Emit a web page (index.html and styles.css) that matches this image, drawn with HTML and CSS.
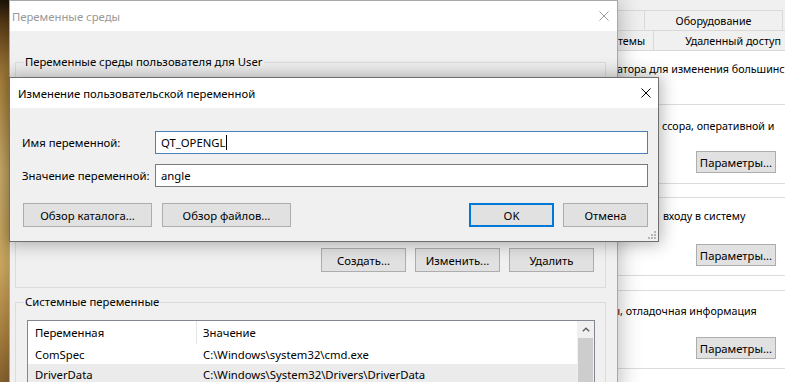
FILE: index.html
```html
<!DOCTYPE html>
<html lang="ru">
<head>
<meta charset="utf-8">
<title>Изменение пользовательской переменной</title>
<link rel="stylesheet" href="styles.css">
</head>
<body>
<div class="desktop">

  <div class="win sys">
    <div class="sys-tabs">
      <div class="tab-row">
        <div class="tab tab-a"></div>
        <div class="tab tab-b">Оборудование</div>
      </div>
      <div class="tab-row">
        <div class="tab tab-c"><span>Защита системы</span></div>
        <div class="tab tab-d">Удаленный доступ</div>
      </div>
    </div>
    <div class="sys-page">
      <div class="sys-intro">атора для изменения большинства параметров.</div>
      <div class="sys-group g1">
        <div class="sys-text">ссора, оперативной и</div>
        <button class="btn sys-btn">Параметры...</button>
      </div>
      <div class="sys-group g2">
        <div class="sys-text">входу в систему</div>
        <button class="btn sys-btn">Параметры...</button>
      </div>
      <div class="sys-group g3">
        <div class="sys-text">ы, отладочная информация</div>
        <button class="btn sys-btn">Параметры...</button>
      </div>
    </div>
  </div>

  <div class="win env">
    <div class="titlebar env-title">
      <span class="title-text">Переменные среды</span>
      <svg class="close" width="10" height="10" viewBox="0 0 10 10"><path d="M0.5 0.5L9.5 9.5M9.5 0.5L0.5 9.5" stroke="#9a9a9a" stroke-width="1" fill="none"/></svg>
    </div>
    <div class="env-body">
      <div class="group group-user">
        <div class="group-label">Переменные среды пользователя для User</div>
        <div class="listview lv-user">
          <div class="lv-head"><div class="c1">Переменная</div><div class="c2">Значение</div></div>
          <div class="lv-row"><div class="c1">Path</div><div class="c2">C:\Users\User\AppData\Local\Microsoft\WindowsApps;</div></div>
          <div class="lv-row"><div class="c1">TEMP</div><div class="c2">C:\Users\User\AppData\Local\Temp</div></div>
          <div class="lv-row"><div class="c1">TMP</div><div class="c2">C:\Users\User\AppData\Local\Temp</div></div>
        </div>
        <div class="btn-row">
          <button class="btn env-btn">Создать...</button>
          <button class="btn env-btn">Изменить...</button>
          <button class="btn env-btn">Удалить</button>
        </div>
      </div>
      <div class="group group-sys">
        <div class="group-label">Системные переменные</div>
        <div class="listview lv-sys">
          <div class="lv-main">
            <div class="lv-head"><div class="c1">Переменная</div><div class="c2">Значение</div></div>
            <div class="lv-row"><div class="c1">ComSpec</div><div class="c2">C:\Windows\system32\cmd.exe</div></div>
            <div class="lv-row sel"><div class="c1">DriverData</div><div class="c2">C:\Windows\System32\Drivers\DriverData</div></div>
          </div>
          <div class="scrollbar">
            <div class="sb-arrow"><svg width="8" height="5" viewBox="0 0 8 5"><path d="M0.8 4.3L4 1.2L7.2 4.3" stroke="#606060" stroke-width="1.4" fill="none"/></svg></div>
            <div class="sb-thumb"></div>
          </div>
        </div>
      </div>
    </div>
  </div>

  <div class="win dlg">
    <div class="titlebar dlg-title">
      <span class="title-text">Изменение пользовательской переменной</span>
      <svg class="close" width="10" height="10" viewBox="0 0 10 10"><path d="M0.5 0.5L9.5 9.5M9.5 0.5L0.5 9.5" stroke="#000" stroke-width="1" fill="none"/></svg>
    </div>
    <div class="dlg-body">
      <div class="form">
        <label class="form-label">Имя переменной:</label>
        <div class="input focused">QT_OPENGL<span class="caret"></span></div>
        <label class="form-label">Значение переменной:</label>
        <div class="input">angle</div>
      </div>
      <div class="dlg-buttons">
        <button class="btn dlg-btn">Обзор каталога...</button>
        <button class="btn dlg-btn">Обзор файлов...</button>
        <button class="btn dlg-btn small ok">OK</button>
        <button class="btn dlg-btn small">Отмена</button>
      </div>
    </div>
    <svg class="grip" width="8" height="8" viewBox="0 0 8 8">
      <rect x="6" y="0" width="2" height="2" fill="#b5b5b5"/>
      <rect x="3" y="3" width="2" height="2" fill="#b5b5b5"/>
      <rect x="6" y="3" width="2" height="2" fill="#b5b5b5"/>
      <rect x="0" y="6" width="2" height="2" fill="#b5b5b5"/>
      <rect x="3" y="6" width="2" height="2" fill="#b5b5b5"/>
      <rect x="6" y="6" width="2" height="2" fill="#b5b5b5"/>
    </svg>
  </div>

</div>
</body>
</html>
```

FILE: styles.css
```css
html, body {
  margin: 0;
  padding: 0;
}
body {
  width: 785px;
  height: 382px;
  overflow: hidden;
  font-family: "Segoe UI", "Noto Sans", "Liberation Sans", sans-serif;
  font-size: 11.3px;
  color: #000;
}
* { box-sizing: border-box; }

/* ---------- Common ---------- */
.btn {
  font: inherit;
  font-size: 11.3px;
  color: #000;
  background: #e1e1e1;
  border: 1px solid #adadad;
  padding: 0;
  margin: 0;
  display: flex;
  align-items: center;
  justify-content: center;
  white-space: nowrap;
}
.titlebar {
  background: #fff;
  display: flex;
  align-items: center;
}
.close { margin-left: auto; display: block; }

.desktop {
  position: relative;
  width: 785px;
  height: 382px;
  overflow: hidden;
  background: linear-gradient(180deg, #1c1307 0%, #5a3c16 6%, #b98f44 22%, #dcbc72 45%, #d6b064 70%, #b08540 88%, #8c6530 100%);
}

.win { position: absolute; }

/* ---------- System properties (background) ---------- */
.sys {
  left: 600px;
  top: 0;
  width: 220px;
  height: 382px;
  background: #f0f0f0;
  font-size: 10.7px;
}
.sys-tabs { padding-top: 10px; }
.tab-row { display: flex; height: 20px; }
.tab {
  border-top: 1px solid #d9d9d9;
  background: #f0f0f0;
  white-space: nowrap;
  overflow: hidden;
  display: flex;
  align-items: center;
  justify-content: center;
  color: #000;
}
.tab-a { width: 44px; }
.tab-b { width: 139px; border-left: 1px solid #d9d9d9; border-right: 1px solid #d9d9d9; }
.tab-c { width: 54px; justify-content: flex-end; padding-right: 8px; border-right: 1px solid #d9d9d9; }
.tab-c span { flex: none; }
.tab-d { width: 158px; }
.sys-page {
  background: #fff;
  border-top: 1px solid #d9d9d9;
  height: 332px;
  padding-top: 9px;
}
.sys-intro {
  padding-left: 17px;
  line-height: 18px;
  white-space: nowrap;
}
.sys-group {
  border-top: 1px solid #dcdcdc;
  border-bottom: 1px solid #dcdcdc;
  display: flex;
  flex-direction: column;
  align-items: flex-start;
}
.sys-text {
  padding-left: 62px;
  line-height: 18px;
  white-space: nowrap;
}
.g2 .sys-text { padding-left: 63px; }
.g3 .sys-text { padding-left: 12px; }
.sys-group .sys-btn { margin-left: 96px; width: 80px; height: 22px; }
.g1 { margin-top: 26px; padding: 12px 0 10px; }
.g1 .sys-btn { margin-top: 16px; }
.g2 { margin-top: 13px; padding: 9px 0 9px; }
.g2 .sys-btn { margin-top: 19px; }
.g3 { margin-top: 14px; padding: 11px 0 9px; }
.g3 .sys-btn { margin-top: 17px; }

/* ---------- Environment variables (middle) ---------- */
.env {
  left: 9px;
  top: 0;
  width: 609px;
  height: 400px;
  background: #f0f0f0;
  border: 1px solid #a8a8a8;
  box-shadow: 0 0 22px rgba(0, 0, 0, 0.3);
}
.env-title { height: 30px; padding-left: 2px; }
.env-title .title-text { color: #999; }
.env-title .close { margin-right: 8px; }
.env-body { padding: 31px 11px 0 5px; }
.group {
  border: 1px solid #dcdcdc;
  padding: 0 10px 0 11px;
}
.group-label {
  margin: -9px 0 0 -3px;
  width: fit-content;
  padding: 0 1px;
  line-height: 16px;
  background: #f0f0f0;
  white-space: nowrap;
}
.group-user { height: 226px; }
.group-sys { margin-top: 14px; height: 120px; }
.listview {
  background: #fff;
  border: 1px solid #828790;
  margin-top: 10px;
}
.lv-user { height: 160px; }
.lv-sys { display: flex; height: 80px; }
.lv-main { flex: 1; }
.lv-head { display: flex; height: 23px; align-items: stretch; }
.lv-head .c1 { border-right: 1px solid #e5e5e5; }
.lv-row { display: flex; height: 20px; }
.lv-row.sel { background: #ebebeb; }
.c1 {
  width: 169px;
  padding-left: 7px;
  display: flex;
  align-items: center;
  white-space: nowrap;
}
.c2 {
  padding-left: 6px;
  display: flex;
  align-items: center;
  white-space: nowrap;
}
.scrollbar {
  width: 17px;
  background: #f0f0f0;
  display: flex;
  flex-direction: column;
}
.sb-arrow {
  height: 17px;
  display: flex;
  align-items: center;
  justify-content: center;
}
.sb-thumb {
  margin: 0 1px;
  flex: 1;
  background: #cdcdcd;
}
.btn-row {
  display: flex;
  justify-content: flex-end;
  gap: 9px;
  margin: 8px 1px 0 0;
}
.btn-row .env-btn { width: 85px; height: 24px; }

/* ---------- Edit dialog (front) ---------- */
.dlg {
  left: 9px;
  top: 77px;
  width: 650px;
  height: 165px;
  background: #f0f0f0;
  border: 1px solid #6f6f6f;
  box-shadow: 0 0 16px 2px rgba(0, 0, 0, 0.3);
}
.dlg-title { height: 30px; padding-left: 8px; }
.dlg-title .close { margin-right: 7px; }
.dlg-body { padding: 23px 10px 14px 13px; }
.form {
  display: grid;
  grid-template-columns: 132px 1fr;
  row-gap: 10px;
  align-items: center;
}
.form-label { white-space: nowrap; margin-left: -1px; }
.input {
  height: 23px;
  background: #fff;
  border: 1px solid #7a7a7a;
  padding-left: 5px;
  display: flex;
  align-items: center;
  white-space: nowrap;
}
.input.focused { border-color: #4a80ba; }
.caret {
  display: inline-block;
  width: 1px;
  height: 15px;
  background: #000;
  margin-left: 1px;
}
.dlg-buttons {
  display: flex;
  margin-top: 16px;
  gap: 10px;
}
.dlg-buttons .dlg-btn { width: 129px; height: 24px; }
.dlg-buttons .dlg-btn.small { width: 85px; }
.dlg-buttons .dlg-btn.ok { margin-left: auto; margin-right: -1px; border: 2px solid #0078d7; }
.grip { position: absolute; right: 2px; bottom: 2px; }
```
